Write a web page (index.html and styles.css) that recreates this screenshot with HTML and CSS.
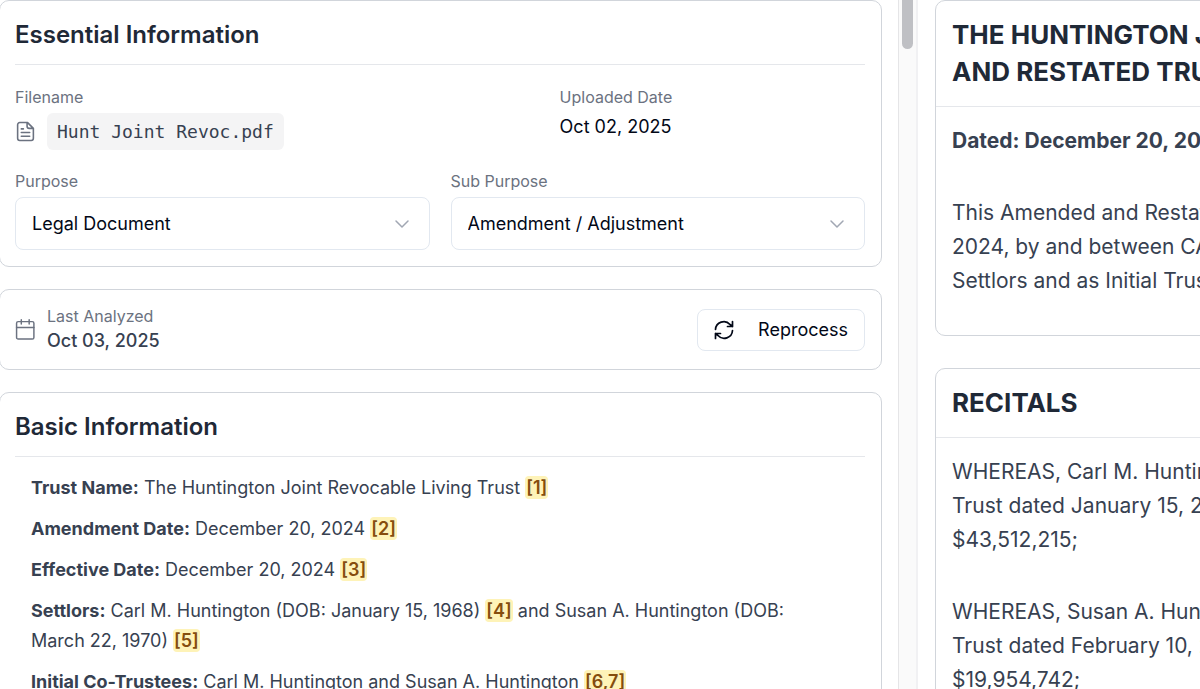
FILE: index.html
```html
<!DOCTYPE html>
<html lang="en">
<head>
<meta charset="utf-8">
<title>Hunt Joint Revoc.pdf</title>
<link rel="stylesheet" href="styles.css">
</head>
<body>
<div class="workspace">
  <main class="details">
    <section class="card">
      <h2 class="card-title">Essential Information</h2>
      <div class="file-row">
        <div>
          <div class="label">Filename</div>
          <div class="file">
            <svg class="icon" viewBox="0 0 20 20" fill="none" stroke="currentColor" stroke-width="1.5" stroke-linecap="round" stroke-linejoin="round" aria-hidden="true"><path d="M12 1.500H4.500a2 2 0 0 0-2 2v13a2 2 0 0 0 2 2h11a2 2 0 0 0 2-2V7zM11.500 1.500v3.500a2 2 0 0 0 2 2h4M6 7.500h2M6 11h8M6 14.500h8"/></svg>
            <code class="filename">Hunt Joint Revoc.pdf</code>
          </div>
        </div>
        <div>
          <div class="label">Uploaded Date</div>
          <div class="value">Oct 02, 2025</div>
        </div>
      </div>
      <div class="select-row">
        <div>
          <label class="label" for="purpose">Purpose</label>
          <div class="select-box">
            <select class="select" id="purpose"><option>Legal Document</option></select>
            <svg class="chevron" viewBox="0 0 16 16" fill="none" stroke="currentColor" stroke-width="1.5" stroke-linecap="round" stroke-linejoin="round" aria-hidden="true"><path d="M2 5l6 6 6-6"/></svg>
          </div>
        </div>
        <div>
          <label class="label" for="sub-purpose">Sub Purpose</label>
          <div class="select-box">
            <select class="select" id="sub-purpose"><option>Amendment / Adjustment</option></select>
            <svg class="chevron" viewBox="0 0 16 16" fill="none" stroke="currentColor" stroke-width="1.5" stroke-linecap="round" stroke-linejoin="round" aria-hidden="true"><path d="M2 5l6 6 6-6"/></svg>
          </div>
        </div>
      </div>
    </section>

    <section class="card analyzed">
      <svg class="icon" viewBox="0 0 20 20" fill="none" stroke="currentColor" stroke-width="1.400" stroke-linecap="round" stroke-linejoin="round" aria-hidden="true"><rect x="1.500" y="2.500" width="16.500" height="16.500" rx="1.500"/><path d="M1.500 8h16.500M6 .8v4M13.500 .8v4"/></svg>
      <div class="analyzed-text">
        <div class="label">Last Analyzed</div>
        <div class="analyzed-date">Oct 03, 2025</div>
      </div>
      <button class="button" type="button">
        <svg class="refresh" viewBox="0 0 20 20" fill="none" stroke="currentColor" stroke-width="1.700" stroke-linecap="round" stroke-linejoin="round" aria-hidden="true"><path d="M1.500 9.500a8.300 8.300 0 0 1 14.500-5L18.500 6.500M18.500 1.500v5h-5M18.500 10.500a8.300 8.300 0 0 1-14.500 5L1.500 13.500M1.500 18.500v-5h5"/></svg>
        Reprocess
      </button>
    </section>

    <section class="card">
      <h2 class="card-title">Basic Information</h2>
      <div class="facts">
        <p><strong>Trust Name:</strong> The Huntington Joint Revocable Living Trust <mark>[1]</mark></p>
        <p><strong>Amendment Date:</strong> December 20, 2024 <mark>[2]</mark></p>
        <p><strong>Effective Date:</strong> December 20, 2024 <mark>[3]</mark></p>
        <p><strong>Settlors:</strong> Carl M. Huntington (DOB: January 15, 1968) <mark>[4]</mark> and Susan A. Huntington (DOB: March 22, 1970) <mark>[5]</mark></p>
        <p><strong>Initial Co-Trustees:</strong> Carl M. Huntington and Susan A. Huntington <mark>[6,7]</mark></p>
      </div>
    </section>
  </main>

  <div class="scroll-track"><div class="scroll-thumb"></div></div>

  <aside class="document">
    <article class="page">
      <h1 class="page-title">THE HUNTINGTON JOINT<br>AND RESTATED TRUST</h1>
      <div class="page-body">
        <p><strong>Dated: December 20, 2024</strong></p>
        <p>This Amended and Restated<br>2024, by and between CARL<br>Settlors and as Initial Trustees</p>
      </div>
    </article>
    <article class="page">
      <h2 class="page-title">RECITALS</h2>
      <div class="page-body">
        <p>WHEREAS, Carl M. Huntington<br>Trust dated January 15, 2024<br>$43,512,215;</p>
        <p>WHEREAS, Susan A. Huntington<br>Trust dated February 10, 2024<br>$19,954,742;</p>
      </div>
    </article>
  </aside>
</div>
</body>
</html>
```
FILE: styles.css
```css
* { box-sizing: border-box; }

body {
  margin: 0;
  overflow: hidden;
  background: #fff;
  color: #020817;
  font-family: Inter, "Liberation Sans", sans-serif;
  font-size: 18px;
}

h1, h2, p { margin: 0; }

.workspace {
  display: grid;
  grid-template-columns: minmax(0, 898fr) 20px minmax(0, 282fr);
  height: 100vh;
  overflow: hidden;
}

.details {
  display: flex;
  flex-direction: column;
  gap: 22px;
  margin-left: -1px;
  padding-right: 16px;
}

.card {
  flex: none;
  padding: 16px 16px 16px 15px;
  border: 1px solid #d1d5db;
  border-radius: 10px;
}

.card-title {
  padding-bottom: 11px;
  border-bottom: 1px solid #e5e7eb;
  color: #1f2937;
  font-size: 24px;
  font-weight: 600;
  line-height: 36px;
}

.label {
  display: block;
  color: #6b7280;
  font-size: 16px;
  line-height: 22px;
}

.file-row {
  display: grid;
  grid-template-columns: 12fr 7fr;
  gap: 21px;
  margin-top: 21px;
}

.file {
  display: flex;
  align-items: center;
  gap: 11px;
  margin-top: 5px;
}

.icon {
  flex: none;
  width: 21px;
  height: 21px;
  color: #6b7280;
}

.filename {
  padding: 4px 10px;
  border-radius: 6px;
  background: #f4f4f5;
  color: #374151;
  font-family: "DejaVu Sans Mono", monospace;
  font-size: 18px;
  line-height: 29px;
}

.value {
  margin-top: 5px;
  line-height: 28px;
}

.select-row {
  display: grid;
  grid-template-columns: 1fr 1fr;
  gap: 21px;
  margin-top: 20px;
}

.select-box {
  position: relative;
  margin-top: 5px;
}

.select {
  width: 100%;
  height: 53px;
  padding: 0 48px 0 16px;
  appearance: none;
  border: 1px solid #e2e8f0;
  border-radius: 8px;
  background: #fff;
  color: #020817;
  font: inherit;
}

.chevron {
  position: absolute;
  top: 19px;
  right: 20px;
  width: 16px;
  height: 16px;
  color: #a1a7b3;
  pointer-events: none;
}

.analyzed {
  display: flex;
  align-items: center;
  gap: 11px;
  padding-top: 15px;
  padding-bottom: 15px;
}

.analyzed-text { flex: 1; }

.analyzed-date {
  color: #374151;
  font-weight: 500;
  line-height: 27px;
}

.button {
  display: flex;
  align-items: center;
  gap: 24px;
  height: 42px;
  padding: 0 16px;
  border: 1px solid #e2e8f0;
  border-radius: 8px;
  background: #fff;
  color: #020817;
  font: inherit;
}

.refresh {
  width: 20px;
  height: 20px;
}

.facts {
  display: flex;
  flex-direction: column;
  gap: 11px;
  padding: 16px 32px 16px 16px;
  color: #374151;
  line-height: 30px;
}

strong { font-weight: 700; }

mark {
  padding: 1px;
  border-radius: 4px;
  background: #fef3b8;
  color: #854d0e;
  font-weight: 600;
}

.scroll-track {
  padding: 0 3px;
  border-right: 2px solid #f1f1f3;
  border-left: 1px solid #e5e5e7;
  background: #fafafa;
}

.scroll-thumb {
  width: 11px;
  height: 49px;
  margin: 0 auto;
  border-radius: 0 0 6px 6px;
  background: #bfc0c4;
}

.document {
  display: flex;
  flex-direction: column;
  gap: 32px;
  padding-left: 17px;
  overflow: hidden;
}

.page {
  flex: none;
  width: 150%;
  border: 1px solid #d1d5db;
  border-radius: 10px;
  white-space: nowrap;
}

.page-title {
  padding: 15px 16px 16px;
  border-bottom: 1px solid #e5e7eb;
  color: #1f2937;
  font-size: 26px;
  font-weight: 700;
  line-height: 37px;
}

.page-body {
  display: flex;
  flex-direction: column;
  gap: 38px;
  padding: 17px 16px 37px;
  color: #374151;
  font-size: 21px;
  line-height: 34px;
}
```
